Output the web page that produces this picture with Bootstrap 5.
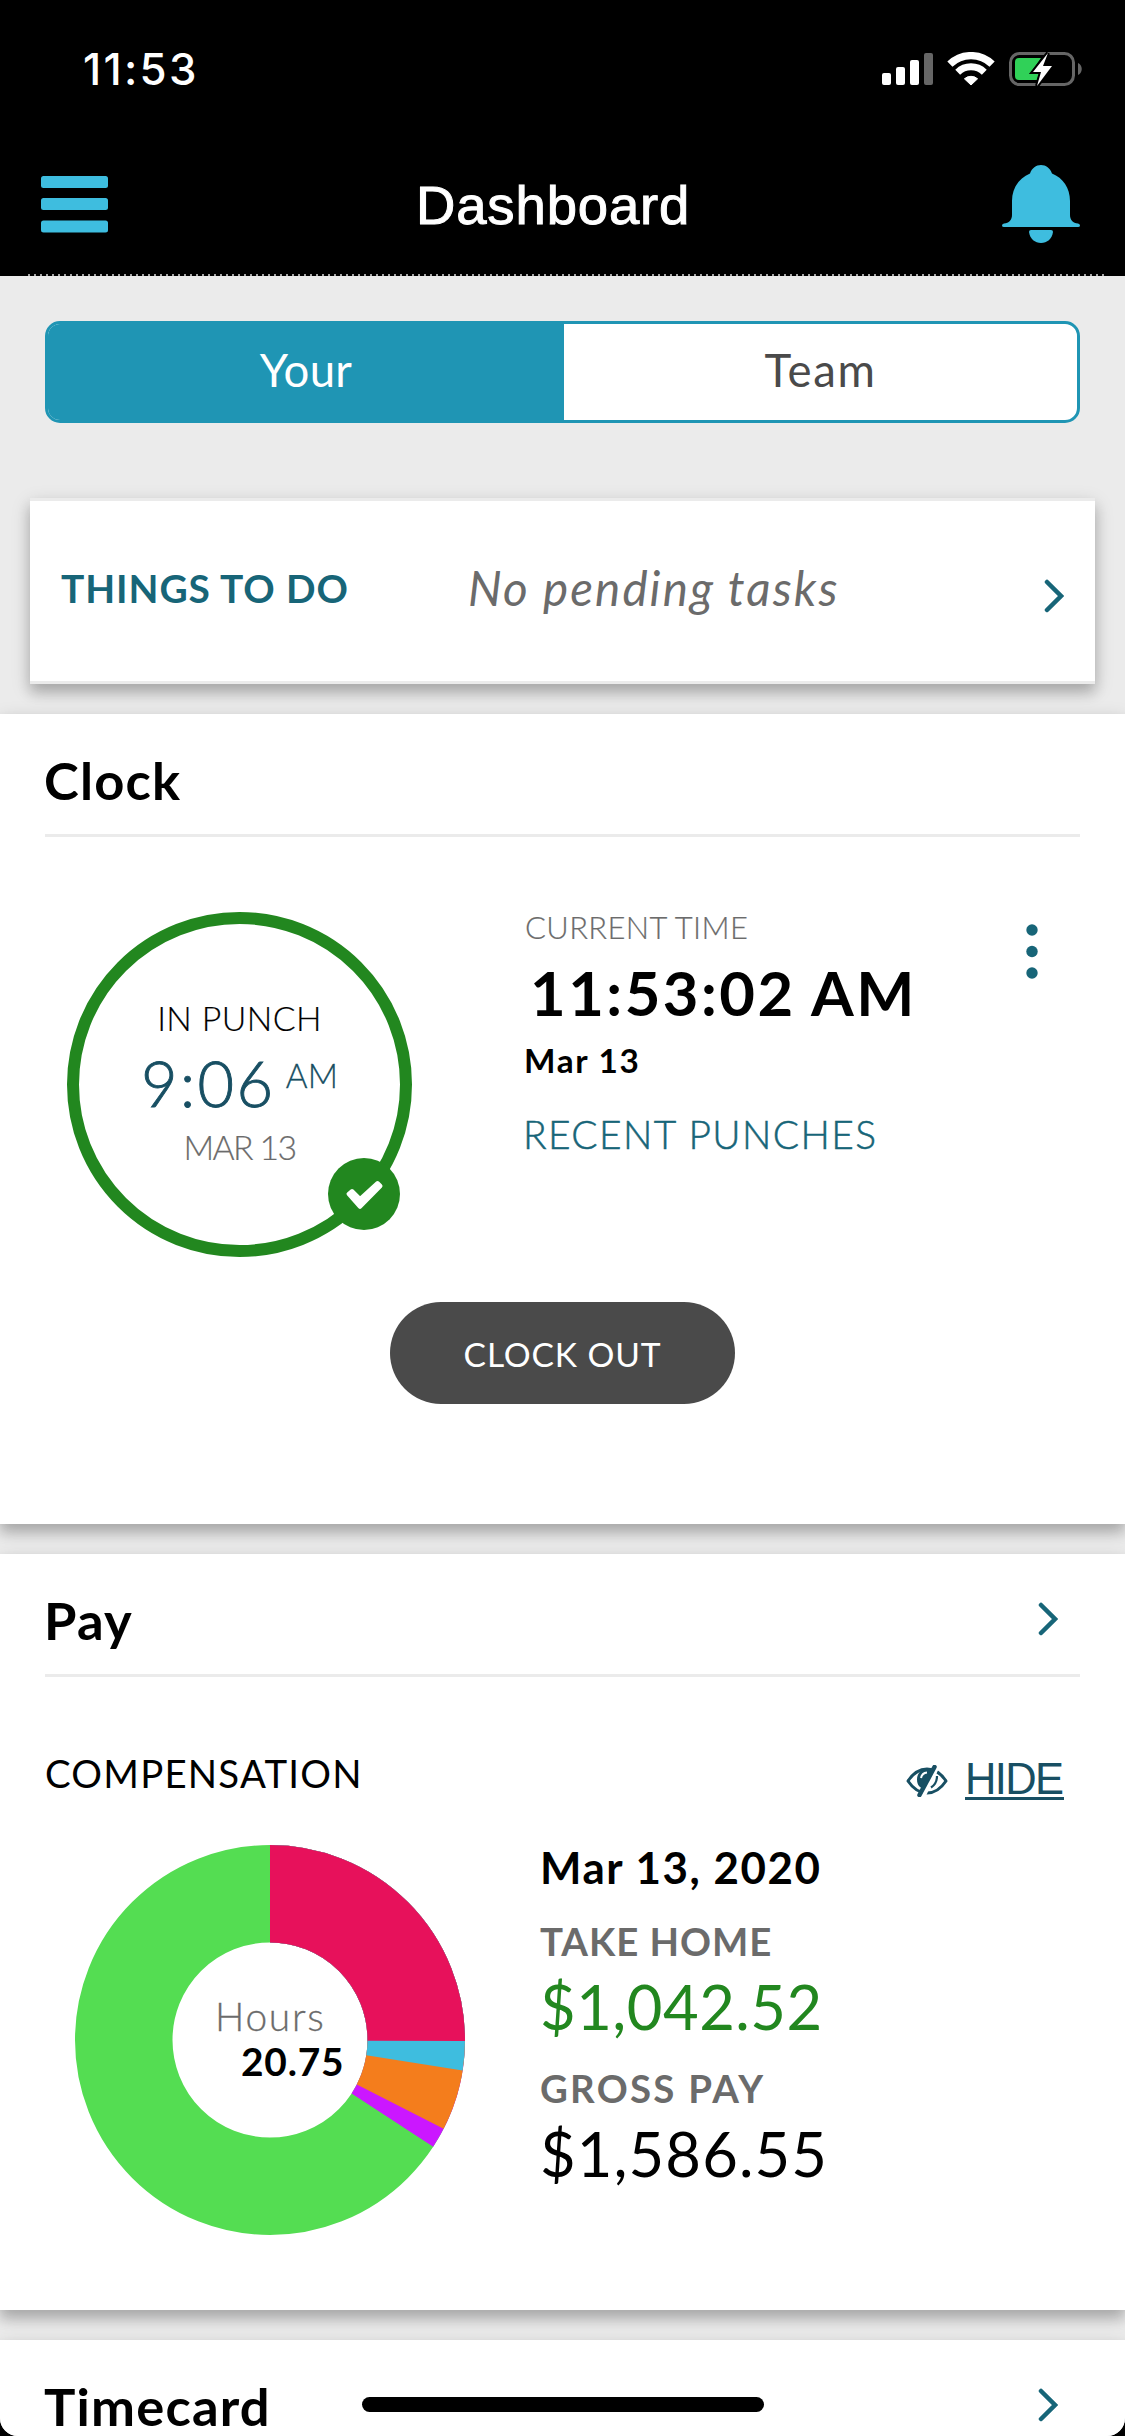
<!DOCTYPE html>
<html lang="en">
<head>
<meta charset="utf-8">
<meta name="viewport" content="width=device-width, initial-scale=1">
<title>Dashboard</title>
<link href="https://cdn.jsdelivr.net/npm/bootstrap@5.3.0/dist/css/bootstrap.min.css" rel="stylesheet">
<style>
html{background:#000}
body{background:#000;font-family:Lato,"Liberation Sans",sans-serif;color:#000;font-variant-ligatures:none;overflow:hidden}
.app{width:1125px;height:2436px;background:#ebebeb;overflow:hidden;border-radius:0 0 18px 18px}
svg{display:block;flex:none}
.txt{white-space:nowrap;line-height:40px}
.teal{color:#176578}.navy{color:#184f63}.grey{color:#6b6b6b}.green{color:#22871f}
.statusbar{height:138px;padding:0 43px 0 83px}
.clocktime{font:500 43.8px Inter,sans-serif;letter-spacing:2.3px}
.topnav{height:136px;padding:2px 45px 0 41px}
.pagetitle{font:400 54.5px "Liberation Sans",sans-serif;margin:-3px 0 0 308px;letter-spacing:.85px;-webkit-text-stroke:1px #fff}
.dots-rule{height:2px;margin:0 18px 0 28px;background:repeating-linear-gradient(90deg,#a8a8a8 0 2px,#000 2px 6px)}
.segment{margin:45px 45px 0;height:102px;border:3px solid #1f95b4;border-radius:15px;background:#fff;overflow:hidden;font-size:45.5px}
.segment>div{padding-bottom:3px}
.seg-on{background:#1f95b4;color:#fff;width:516px;letter-spacing:.3px}
.seg-off{color:#4a4a4a;letter-spacing:1.7px}
.lift{box-shadow:0 6px 18px rgba(0,0,0,.18),0 9px 12px rgba(0,0,0,.16)}
.todo{margin:75px 30px 0;height:186px;border-top:3px solid #ebebeb;border-bottom:3px solid #ebebeb;padding:0 31px 7px;background:#fff}
.todo-title{font-size:38.9px;font-weight:700;letter-spacing:.9px;width:407px}
.todo-note{font-size:47.5px;font-style:italic;letter-spacing:2.1px}
.todo svg{margin-top:16px}
.panel{margin-top:30px;background:#fff;position:relative}
.panel-head{height:123px;margin:0 45px;padding:8px 22px 0 0;border-bottom:3px solid #ebebeb}
.panel-head h2{font-size:52.5px;font-weight:700;letter-spacing:1.2px;margin:2px 0 0 -1px}
.panel-head svg{margin-top:1px}
.clock-panel{height:810px}
.pay-panel{height:756px}
.clock-row{padding:75px 87px 0 67px}
.punch{width:345px;height:345px;border:12px solid #22871f;border-radius:50%;padding-top:74px;position:relative}
.punch-badge{position:absolute;right:0;bottom:15px}
.f34{font-size:33.8px;font-weight:300;-webkit-text-stroke:.2px}
.punch-time{font-size:63px;font-weight:300;line-height:62px;letter-spacing:2.5px;margin:14px 0 13px;-webkit-text-stroke:.9px}
.punch-time small{font-size:33.3px;line-height:46px;letter-spacing:.2px;margin-left:10px;-webkit-text-stroke:.3px}
.now{margin-left:111px}
.now-label{font-size:30.9px;font-weight:300;letter-spacing:.4px;margin:-4px 0 13px 2px;-webkit-text-stroke:.2px}
.now-time{font-size:61.5px;font-weight:700;line-height:62px;letter-spacing:2.5px;margin:0 0 17px 7px}
.now-date{font-size:33.3px;font-weight:700;letter-spacing:1.7px;margin:0 0 34px 1px}
.now-link{font-size:38.9px;font-weight:300;letter-spacing:1.4px;-webkit-text-stroke:.5px}
.btn-clock{width:345px;height:102px;margin-top:45px;padding:8px 0 6px;background:#4a4a4a;color:#fff;font-size:33.6px;letter-spacing:.85px;border:0}
.comp-row{height:168px;padding:76px 61px 0 45px}
.comp{font-size:38.4px;letter-spacing:1.22px}
.hide-link{font:400 43.5px/36px "Liberation Sans",sans-serif;letter-spacing:-1.6px;border-bottom:3px solid #184f63;margin:8px 0 0 17px;text-decoration:none;width:99px}
.pay-row{padding-left:75px}
.pay-info{margin-left:75px}
.pay-date{font-size:43.9px;font-weight:700;line-height:44px;letter-spacing:1.55px;margin-bottom:32px}
.pay-label{font-size:38.4px;font-weight:700;margin:0 0 14px}
.pay-sum{font-size:61.5px;line-height:62px}
.donut-label{font:300 38.9px Lato,sans-serif;letter-spacing:1.7px;fill:#6b6b6b;stroke:#6b6b6b;stroke-width:.3px}
.donut-value{font:700 38.9px Lato,sans-serif;letter-spacing:.8px}
.home-bar{position:absolute;left:362px;top:57px;width:402px;height:15px;border-radius:8px;background:#000}
</style>
<script src="https://cdn.jsdelivr.net/npm/bootstrap@5.3.0/dist/js/bootstrap.bundle.min.js"></script>
</head>
<body>
<div class="app">
  <header class="bg-black text-white">
    <div class="statusbar d-flex align-items-center justify-content-between">
      <span class="clocktime">11:53</span>
      <svg width="200" height="34" viewBox="0 0 200 34">
        <g fill="#fff"><rect y="21" width="9" height="12" rx="2"/><rect x="14" y="15" width="9" height="18" rx="2"/><rect x="28" y="8" width="9" height="25" rx="2"/></g>
        <rect x="42" y="1" width="9" height="32" rx="2" fill="#666"/>
        <g fill="none" stroke="#fff"><path stroke-width="7.4" d="M67.9 12.2A30.3 30.3 0 0 1 110.1 12.2"/><path stroke-width="7" d="M75.7 20.2A19.2 19.2 0 0 1 102.3 20.2"/></g>
        <path fill="#fff" d="M82.4 26.8A10 10 0 0 1 95.6 26.8L89 33Z" stroke="#fff" stroke-linejoin="round"/>
        <rect x="128.500" y="1.500" width="63" height="31" rx="9" fill="none" stroke="#666" stroke-width="3"/>
        <path fill="#666" d="M196 11C201 13 201 21 196 23Z"/>
        <path fill="#30d158" d="M137 6H159L148 22H157L155 28H137Q133 28 133 24V10Q133 6 137 6Z"/>
        <path fill="#fff" stroke="#000" stroke-width="4" paint-order="stroke" d="M166 1L151 20H159L155 34L170 14H161Z"/>
      </svg>
    </div>
    <nav class="topnav d-flex align-items-center">
      <svg width="67" height="62" fill="#3ebddf"><rect width="67" height="12" rx="2.500"/><rect y="22" width="67" height="12" rx="2.500"/><rect y="44.500" width="67" height="12" rx="2.500"/></svg>
      <span class="pagetitle text-nowrap">Dashboard</span>
      <svg class="ms-auto" width="78" height="84" fill="#3ebddf"><path d="M28 8.500C30 3 34 0 39 0S48 3 50 8.500C61 13 68 23 68 36V50C68 55 71 58 76 58.500Q78 59 78 60.500T76 62H2Q0 62 0 60.500T2 58.500C7 58 10 55 10 50V36C10 23 17 13 28 8.500Z"/><path d="M29 65H49Q51 65 51 67C50 74 45 78 39 78S28 74 27 67Q27 65 29 65Z"/></svg>
    </nav>
    <div class="dots-rule"></div>
  </header>

  <main>
    <div class="segment d-flex text-center">
      <div class="seg-on d-flex align-items-center justify-content-center">Your</div>
      <div class="seg-off d-flex align-items-center justify-content-center flex-fill">Team</div>
    </div>

    <div class="todo lift d-flex align-items-center">
      <div class="todo-title txt teal">THINGS TO DO</div>
      <div class="todo-note txt grey">No pending tasks</div>
      <svg class="ms-auto" width="20" height="34" fill="none" stroke="#176578" stroke-width="4.500" stroke-linecap="round"><path d="M3 3L17 17L3 31"/></svg>
    </div>

    <section class="panel clock-panel lift">
      <div class="panel-head d-flex align-items-center"><h2>Clock</h2></div>
      <div class="clock-row d-flex align-items-start">
        <div class="punch text-center">
          <div class="txt f34" style="letter-spacing:.4px">IN PUNCH</div>
          <div class="punch-time txt navy d-flex justify-content-center align-items-start">9:06<small class="fw-light">AM</small></div>
          <div class="txt f34 grey" style="letter-spacing:-1.6px">MAR 13</div>
          <svg class="punch-badge" width="72" height="72"><circle cx="36" cy="36" r="36" fill="#22871f"/><path d="M20.500 36L24 33L32 41L49.500 25L52.500 28L32 48.800Z" fill="#fff" stroke="#fff" stroke-width="4" stroke-linejoin="round"/></svg>
        </div>
        <div class="now">
          <div class="now-label txt grey">CURRENT TIME</div>
          <div class="now-time txt">11:53:02 AM</div>
          <div class="now-date txt">Mar 13</div>
          <div class="now-link txt teal">RECENT PUNCHES</div>
        </div>
        <svg class="ms-auto" width="12" height="56" fill="#176578" style="margin-top:12px"><circle cx="6" cy="6" r="5.700"/><circle cx="6" cy="27.500" r="5.700"/><circle cx="6" cy="49" r="5.700"/></svg>
      </div>
      <button class="btn btn-clock rounded-pill d-block mx-auto">CLOCK OUT</button>
    </section>

    <section class="panel pay-panel lift">
      <div class="panel-head d-flex align-items-center justify-content-between"><h2>Pay</h2>
        <svg width="20" height="34" fill="none" stroke="#176578" stroke-width="4.500" stroke-linecap="round"><path d="M3 3L17 17L3 31"/></svg></div>
      <div class="comp-row d-flex align-items-start">
        <div class="comp txt">COMPENSATION</div>
        <svg class="ms-auto" width="42" height="32" viewBox="0 0 42 32" style="margin-top:12px">
          <path d="M2 16Q10 4 21 4T40 16Q32 28 21 28T2 16Z" fill="none" stroke="#184f63" stroke-width="3" stroke-linejoin="round"/>
          <path d="M21 4C14 5 11 9 11 14.500C11 20 14 23 18 24L27 4Z" fill="#184f63"/>
          <path d="M15 13Q16 8 21 7.500" fill="none" stroke="#fff" stroke-width="2"/>
          <path d="M32 0L17 32" stroke="#fff" stroke-width="4.500"/>
          <path d="M28.500 2L13.500 30" stroke="#184f63" stroke-width="4.500" stroke-linecap="round"/>
          <path d="M31 11C31 16 29 20 25 22.500" fill="none" stroke="#184f63" stroke-width="2.200"/>
        </svg>
        <a href="#" class="hide-link navy">HIDE</a>
      </div>
      <div class="pay-row d-flex align-items-start">
        <svg width="390" height="390" viewBox="0 0 390 390">
          <g fill="none" stroke-width="97.500" transform="rotate(-90 195 195)">
            <circle cx="195" cy="195" r="146.250" stroke="#54dd52"/>
            <circle cx="195" cy="195" r="146.250" stroke="#cb17ff" pathLength="360" stroke-dasharray="123.200 360"/>
            <circle cx="195" cy="195" r="146.250" stroke="#f47d1c" pathLength="360" stroke-dasharray="117.100 360"/>
            <circle cx="195" cy="195" r="146.250" stroke="#3ebddf" pathLength="360" stroke-dasharray="99.050 360"/>
            <circle cx="195" cy="195" r="146.250" stroke="#e7115b" pathLength="360" stroke-dasharray="90.300 360"/>
          </g>
          <text class="donut-label" x="140" y="186">Hours</text>
          <text class="donut-value" x="166" y="231">20.75</text>
        </svg>
        <div class="pay-info">
          <div class="pay-date txt">Mar 13, 2020</div>
          <div class="pay-label txt grey" style="letter-spacing:.96px">TAKE HOME</div>
          <div class="pay-sum txt green" style="letter-spacing:.5px;margin-bottom:31px">$1,042.52</div>
          <div class="pay-label txt grey" style="letter-spacing:2.25px">GROSS PAY</div>
          <div class="pay-sum txt" style="letter-spacing:1.1px">$1,586.55</div>
        </div>
      </div>
    </section>

    <section class="panel lift">
      <div class="panel-head d-flex align-items-center justify-content-between"><h2>Timecard</h2>
        <svg width="20" height="34" fill="none" stroke="#176578" stroke-width="4.500" stroke-linecap="round"><path d="M3 3L17 17L3 31"/></svg></div>
      <div class="home-bar"></div>
    </section>
  </main>
</div>
</body>
</html>
